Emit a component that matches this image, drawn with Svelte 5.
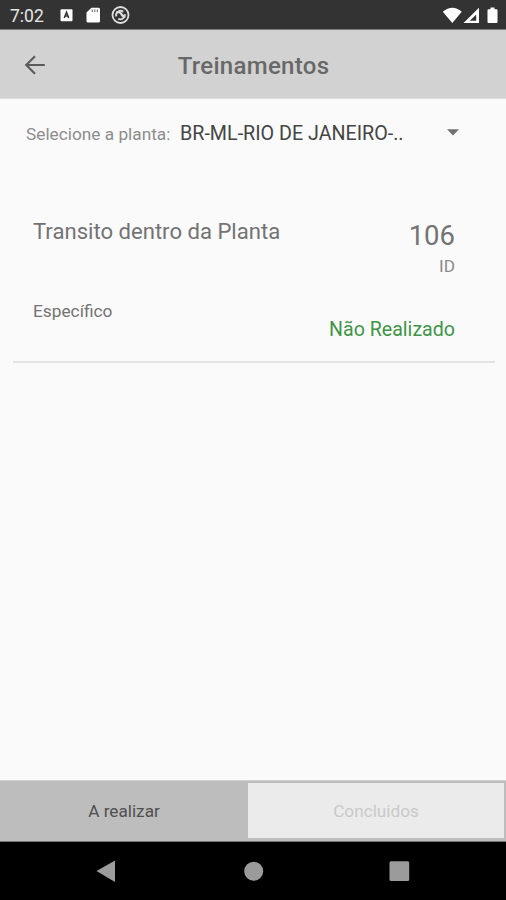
<script>
	const plant = 'BR-ML-RIO DE JANEIRO-..';

	const trainings = [
		{ id: 106, name: 'Transito dentro da Planta', type: 'Específico', status: 'Não Realizado' }
	];

	let activeTab = $state('todo');
</script>

<div class="screen">
	<div class="status-bar">
		<span class="time">7:02</span>
		<svg class="notifications" width="74" height="20" viewBox="0 0 74 20" aria-hidden="true">
			<rect x="0.5" y="4.3" width="12" height="12" rx="1" fill="#fff" />
			<path d="M4.2 13 6.5 7.3 8.8 13M5.2 11h2.6" fill="none" stroke="#333" stroke-width="1.5" />
			<path d="M31.5 2.8H38.5q1.5 0 1.5 1.5v11.7q0 1.5-1.5 1.5H28q-1.5 0-1.5-1.5V7.5Z" fill="#fff" />
			<path d="M32.3 4.5v2.5M34.8 4.5v2.5M37.3 4.5v2.5" stroke="#777" stroke-width="1.2" />
			<circle cx="60.5" cy="10" r="8" fill="none" stroke="#dedede" stroke-width="1.8" />
			<path
				d="M56.3 11.6a4.5 4.5 0 0 1 7-4.9M64.8 9.2a4.5 4.5 0 0 1-6.6 4.5"
				fill="none"
				stroke="#dedede"
				stroke-width="1.8"
			/>
			<path d="M56.4 7.4q3.6-1.2 5 1.6 1.2 2.8 4 2.6" fill="none" stroke="#dedede" stroke-width="2.2" />
		</svg>
		<svg class="system" width="58" height="20" viewBox="0 0 58 20" aria-hidden="true">
			<path d="M1.8 6.7Q11.3 -1.3 20.8 6.7L11.3 18Z" fill="#fff" />
			<path d="M38 2.7V18H22.5Z" fill="#fff" />
			<path d="M35.2 9.5V15.8H28.8Z" fill="#333" />
			<path d="M47.5 4.3h2V2.6h4v1.7h2q1 0 1 1V17q0 1-1 1h-8q-1 0-1-1V5.3q0-1 1-1Z" fill="#fff" />
		</svg>
	</div>

	<header>
		<button class="back" aria-label="Voltar">
			<svg width="22" height="22" viewBox="0 0 22 22">
				<path d="M20.8 11H2.5M11 2.2 2.2 11l8.8 8.8" fill="none" stroke="#5a5a5a" stroke-width="2.1" />
			</svg>
		</button>
		<h1>Treinamentos</h1>
	</header>

	<main>
		<div class="picker">
			<span class="label">Selecione a planta:</span>
			<span class="value">{plant}</span>
			<svg width="12" height="7" viewBox="0 0 12 7" aria-hidden="true">
				<path d="M0 .3h12L6 6.5Z" fill="#717171" />
			</svg>
		</div>

		<ul>
			{#each trainings as training (training.id)}
				<li>
					<div class="info">
						<span class="name">{training.name}</span>
						<span class="type">{training.type}</span>
					</div>
					<div class="details">
						<span class="number">{training.id}</span>
						<span class="id">ID</span>
						<span class="status">{training.status}</span>
					</div>
				</li>
			{/each}
		</ul>
	</main>

	<div class="tabs">
		<button class:active={activeTab === 'todo'} onclick={() => (activeTab = 'todo')}>
			A realizar
		</button>
		<button class:active={activeTab === 'done'} onclick={() => (activeTab = 'done')}>
			Concluidos
		</button>
	</div>

	<div class="system-nav">
		<svg width="506" height="58" viewBox="0 0 506 58" fill="#9b9b9b" aria-hidden="true">
			<path d="M96.5 29 115 18.5V40Z" />
			<circle cx="253.7" cy="29.2" r="9.5" />
			<rect x="389.5" y="19.2" width="19.7" height="19.7" rx="1.5" />
		</svg>
	</div>
</div>

<style>
	:global(body) {
		margin: 0;
	}

	.screen {
		display: flex;
		flex-direction: column;
		height: 900px;
		background: #fafafa;
		font-family: Roboto, sans-serif;
		color: #737373;
		overflow: hidden;
	}

	.status-bar {
		display: flex;
		align-items: center;
		box-sizing: border-box;
		height: 30px;
		padding: 1px 7px 0 10px;
		background: #333;
		border-bottom: 1px solid #7c7c7c;
	}

	.time {
		width: 50px;
		padding-top: 2px;
		font-size: 17.5px;
		color: #e6e6e6;
	}

	.system {
		margin-left: auto;
	}

	header {
		display: grid;
		grid-template-columns: 70px 1fr 69px;
		align-items: center;
		box-sizing: border-box;
		height: 69px;
		background: #d2d2d2;
		border-bottom: 1px solid #dedede;
	}

	h1 {
		margin: 4px 0 0;
		text-align: center;
		font-size: 24px;
		font-weight: 500;
		line-height: 28px;
		letter-spacing: 0.3px;
		color: #686868;
	}

	button {
		border: 0;
		padding: 0;
		background: transparent;
		font: inherit;
		cursor: pointer;
	}

	.back {
		display: flex;
		justify-content: center;
		margin-top: 1px;
	}

	main {
		flex: 1;
	}

	.picker {
		display: flex;
		align-items: center;
		height: 68px;
		padding: 0 47px 0 26px;
	}

	.label {
		width: 154px;
		padding-top: 2px;
		font-size: 17.25px;
		white-space: nowrap;
		color: #8d8d8d;
	}

	.value {
		font-size: 19.7px;
		white-space: nowrap;
		color: #454545;
	}

	.picker svg {
		margin: 0 0 1px auto;
	}

	ul {
		margin: 0;
		padding: 38px 11px 0 13px;
		list-style: none;
	}

	li {
		display: flex;
		justify-content: space-between;
		box-sizing: border-box;
		height: 158px;
		padding: 12px 40px 0 20px;
		border-bottom: 2px solid #e4e4e4;
	}

	.info,
	.details {
		display: flex;
		flex-direction: column;
		white-space: nowrap;
	}

	.details {
		align-items: flex-end;
	}

	.name {
		font-size: 22.1px;
		line-height: 28px;
	}

	.type {
		margin-top: 56px;
		font-size: 17.3px;
		line-height: 20px;
	}

	.number {
		margin-top: 2px;
		font-size: 27.5px;
		line-height: 34px;
	}

	.id {
		margin-top: 3px;
		font-size: 17.2px;
		line-height: 20px;
		color: #8a8a8a;
	}

	.status {
		margin-top: 42px;
		font-size: 19.6px;
		line-height: 24px;
		color: #3f9547;
	}

	.tabs {
		display: grid;
		grid-template-columns: 246px 1fr;
		box-sizing: border-box;
		height: 62px;
		padding: 2px 2px 3px;
		background: #bdbdbd;
		border-bottom: 1px solid #777;
		border-top: 1px solid #cfcfcf;
	}

	.tabs button {
		padding-top: 1px;
		background: #ebebeb;
		font-size: 17.2px;
		color: #c9c9c9;
	}

	.tabs button.active {
		padding-right: 2px;
		background: #bdbdbd;
		color: #505050;
	}

	.system-nav {
		height: 58px;
		background: #000;
	}

	.system-nav svg {
		display: block;
	}
</style>
